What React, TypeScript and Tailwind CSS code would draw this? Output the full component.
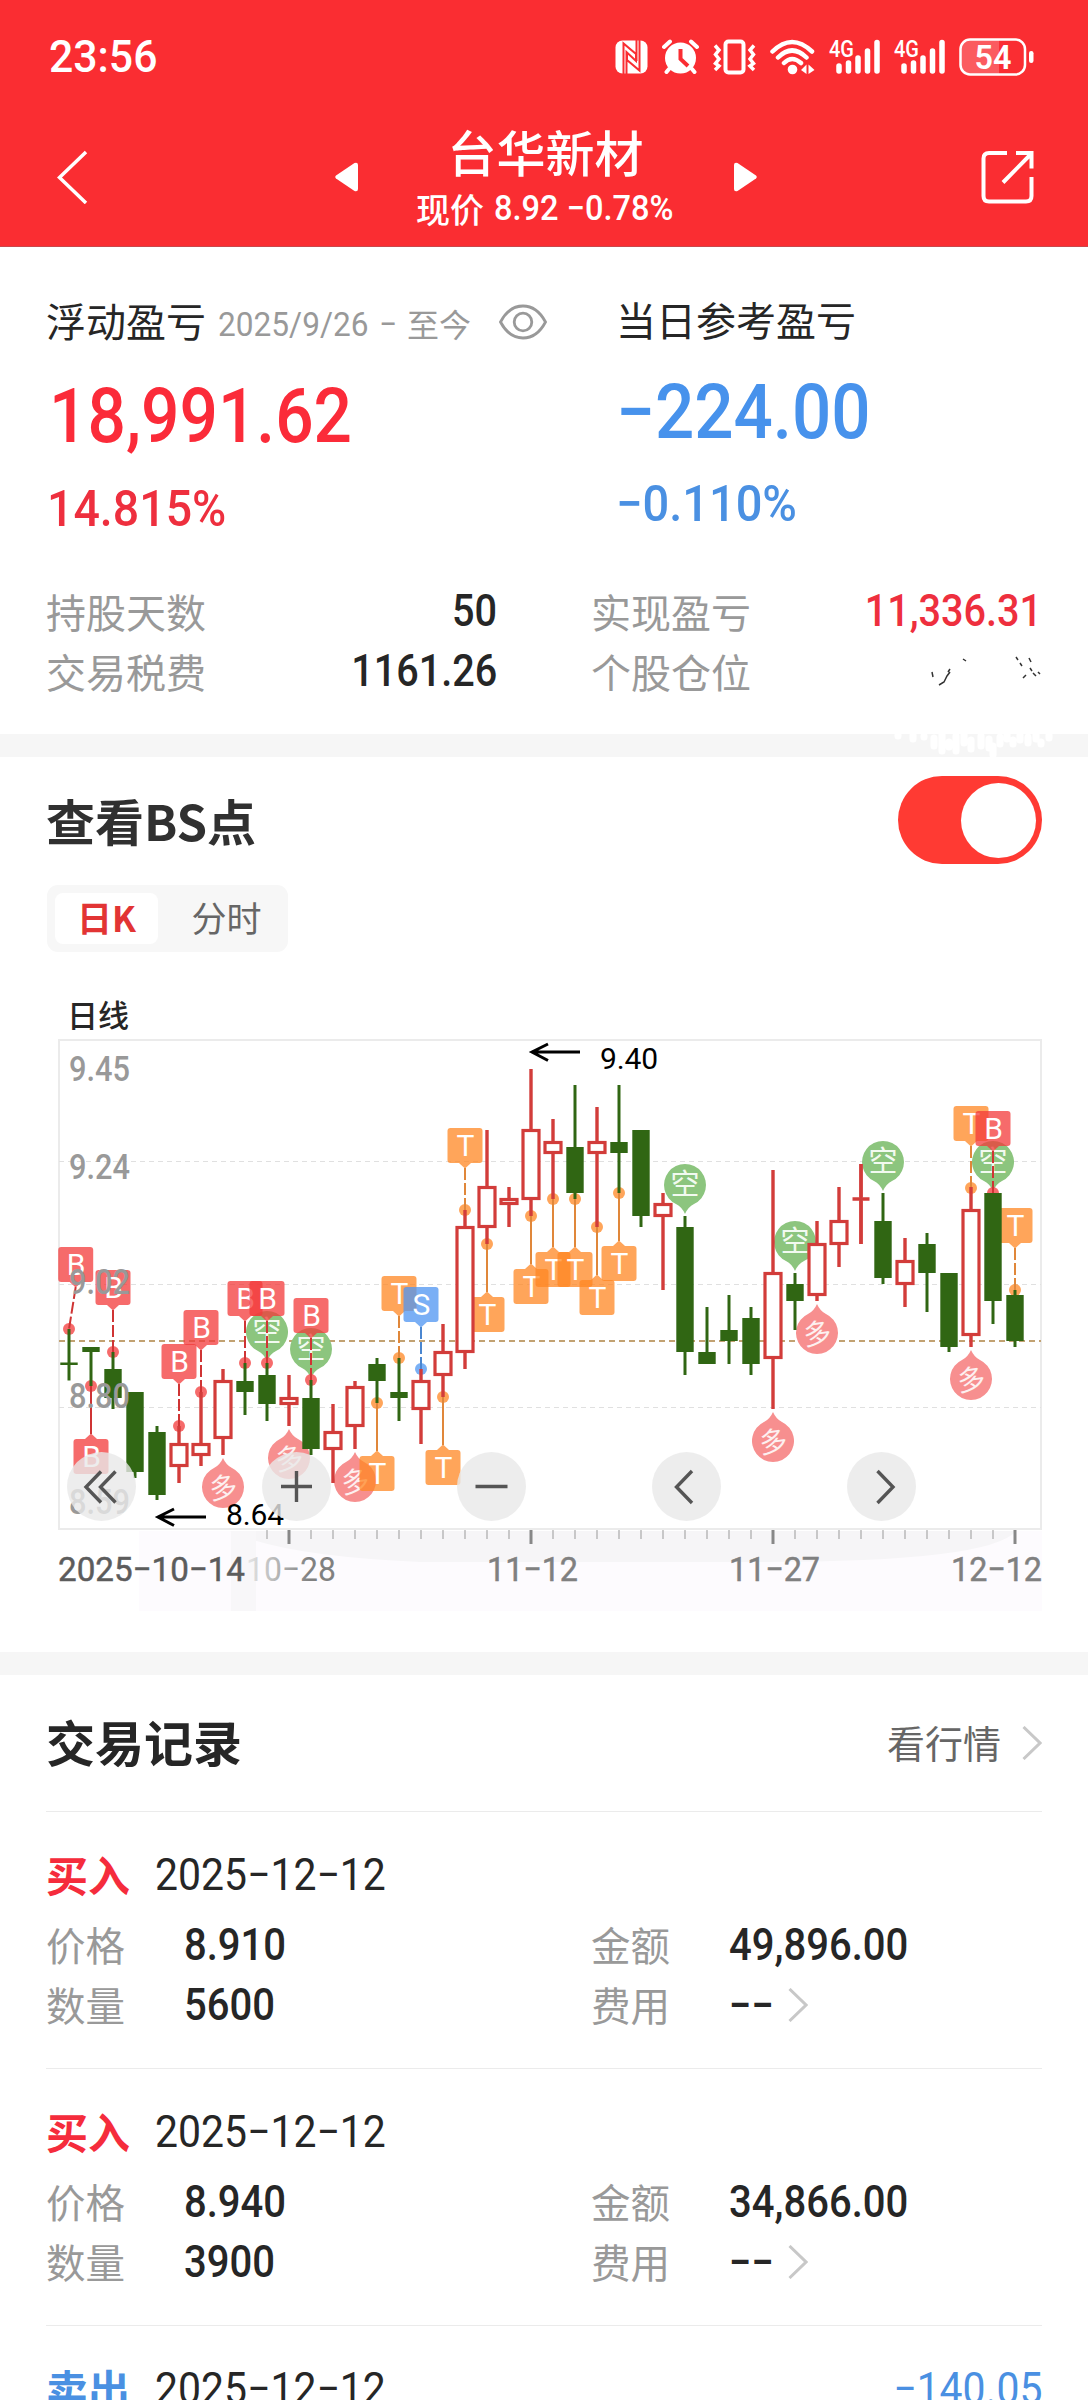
import { Fragment } from "react";

type Candle = {
  // pixel rows: wick top, body top, body bottom, wick bottom
  c: "r" | "g";
  y: [number, number, number, number];
};

const candles: Candle[] = [
  { c: "g", y: [1329, 1362.5, 1365, 1380.5] },
  { c: "g", y: [1347, 1347, 1352, 1386] },
  { c: "g", y: [1352, 1369, 1398, 1409] },
  { c: "g", y: [1392, 1392, 1472, 1478] },
  { c: "g", y: [1426, 1432, 1495, 1500] },
  { c: "r", y: [1426, 1443, 1467, 1483] },
  { c: "r", y: [1392, 1443, 1456, 1466] },
  { c: "r", y: [1369, 1380, 1439, 1455] },
  { c: "g", y: [1363, 1381, 1392, 1415] },
  { c: "g", y: [1363, 1375, 1404, 1421] },
  { c: "r", y: [1375, 1397, 1405, 1426] },
  { c: "g", y: [1380, 1398, 1449, 1455] },
  { c: "r", y: [1404, 1431, 1450, 1483] },
  { c: "r", y: [1381, 1386, 1427, 1449] },
  { c: "g", y: [1358, 1364, 1381, 1403] },
  { c: "g", y: [1358, 1392, 1398, 1421] },
  { c: "r", y: [1369, 1380, 1410, 1444] },
  { c: "r", y: [1324, 1351, 1376, 1397] },
  { c: "r", y: [1210, 1226, 1353, 1369] },
  { c: "r", y: [1130, 1186, 1228, 1244] },
  { c: "r", y: [1187, 1198, 1205, 1227] },
  { c: "r", y: [1069, 1129, 1200, 1216] },
  { c: "r", y: [1119, 1141, 1154, 1199] },
  { c: "g", y: [1085, 1147, 1193, 1199] },
  { c: "r", y: [1107, 1141, 1154, 1227] },
  { c: "g", y: [1085, 1142, 1153, 1193] },
  { c: "g", y: [1130, 1130, 1216, 1227] },
  { c: "r", y: [1193, 1203, 1217, 1290] },
  { c: "g", y: [1216, 1227, 1352, 1375] },
  { c: "g", y: [1307, 1352, 1364, 1364] },
  { c: "g", y: [1295, 1330, 1341, 1364] },
  { c: "g", y: [1307, 1318, 1364, 1375] },
  { c: "r", y: [1170, 1272, 1359, 1409] },
  { c: "g", y: [1273, 1284, 1301, 1330] },
  { c: "r", y: [1221, 1243, 1296, 1301] },
  { c: "r", y: [1187, 1220, 1245, 1267] },
  { c: "r", y: [1164, 1197, 1201, 1244] },
  { c: "g", y: [1193, 1221, 1278, 1284] },
  { c: "r", y: [1238, 1260, 1285, 1307] },
  { c: "g", y: [1233, 1244, 1273, 1312] },
  { c: "g", y: [1273, 1273, 1347, 1352] },
  { c: "r", y: [1187, 1209, 1336, 1347] },
  { c: "g", y: [1193, 1193, 1301, 1324] },
  { c: "g", y: [1290, 1295, 1341, 1347] },
];

const cx = (i: number) => 69 + 22 * i;

// [candle index, letter, dot y, box sits below the dot]
const marks: [number, "B" | "S" | "T", number, boolean][] = [
  [0, "B", 1329, false],
  [1, "B", 1386, true],
  [2, "B", 1352, false],
  [5, "B", 1426, false],
  [6, "B", 1392, false],
  [8, "B", 1363, false],
  [9, "B", 1363, false],
  [11, "B", 1380, false],
  [14, "T", 1403, true],
  [15, "T", 1358, false],
  [16, "S", 1369, false],
  [17, "T", 1397, true],
  [18, "T", 1210, false],
  [19, "T", 1244, true],
  [21, "T", 1216, true],
  [22, "T", 1199, true],
  [23, "T", 1199, true],
  [24, "T", 1227, true],
  [25, "T", 1193, true],
  [41, "T", 1188, false],
  [42, "B", 1193, false],
  [43, "T", 1290, false],
];

const markFill = { B: "#f33a3a", T: "#ff8723", S: "#4e95f2" };
const markLine = { B: "#cf3434", T: "#e0873a", S: "#4a86d0" };

// [candle index, anchor y]
const shorts: [number, number][] = [
  [9, 1363],
  [11, 1380],
  [28, 1216],
  [33, 1273],
  [37, 1193],
  [42, 1193],
];
const longs: [number, number][] = [
  [7, 1455],
  [10, 1426],
  [13, 1449],
  [32, 1409],
  [34, 1301],
  [41, 1347],
];

function Mark({ i, t, y, below }: { i: number; t: "B" | "S" | "T"; y: number; below: boolean }) {
  const x = cx(i);
  const bx = i === 0 ? x + 6.7 : x;
  const top = below ? y + 53 : y - 82;
  const tail = below
    ? `M${bx - 6} ${top} L${bx} ${top - 5.5} L${bx + 6} ${top} Z`
    : `M${bx - 6} ${top + 35} L${bx} ${top + 40.5} L${bx + 6} ${top + 35} Z`;
  return (
    <g>
      <g fill={markFill[t]} opacity="0.75">
        <rect x={bx - 17.5} y={top} width="35" height="35" rx="3" />
        <path d={tail} />
      </g>
      <circle cx={x} cy={y} r="6" fill={markFill[t]} opacity="0.75" />
      {below ? (
        <path d={`M${x} ${y} V${top - 5}`} stroke={markLine[t]} strokeWidth="2" />
      ) : (
        <path d={`M${bx} ${top + 40} L${x} ${y}`} stroke={markLine[t]} strokeWidth="2" strokeDasharray="12 3" />
      )}
      <text x={bx + 0.5} y={top + 28} textAnchor="middle" fontSize="30" fill="#fff" className="font-['Roboto']">
        {t}
      </text>
    </g>
  );
}

function KChart() {
  return (
    <svg viewBox="0 1034 1088 582" className="block w-full h-[582px]" fill="none">
      <path d="M139 1531 H1042 V1611 H139 Z" fill="#fdfbfe" />
      <path d="M230 1531 H1016 Q990 1562 760 1562 H420 Q280 1556 230 1531 Z" fill="#f6f5f7" />
      <path d="M231 1531 H256 V1611 H231 Z" fill="#f8f7f9" />
      <path d="M59 1040 H1041 V1529 H59 Z" stroke="#ebebeb" strokeWidth="2" />
      <path d="M59 1161.5 H1041 M59 1284.5 H1041 M59 1407.5 H1041" stroke="#e0e0e0" strokeDasharray="5 4" />
      <path d="M59 1341 H1041" stroke="#c2a272" strokeWidth="2" strokeDasharray="6 4" />

      {shorts.map(([i, y]) => (
        <g key={`s${i}`}>
          <path
            d={`M${cx(i)} ${y - 2} Q${cx(i) - 3} ${y - 9} ${cx(i) - 9} ${y - 12} A21 21 0 1 1 ${cx(i) + 9} ${y - 12} Q${cx(i) + 3} ${y - 9} ${cx(i)} ${y - 2} Z`}
            fill="#8cc57e"
          />
          <text x={cx(i)} y={y - 21} textAnchor="middle" fontSize="29" fill="#f2faf0" className="font-['Noto_Sans_CJK_SC']">
            空
          </text>
        </g>
      ))}
      {longs.map(([i, y]) => (
        <g key={`l${i}`}>
          <path
            d={`M${cx(i)} ${y + 3} Q${cx(i) + 3} ${y + 10} ${cx(i) + 9} ${y + 13} A21 21 0 1 1 ${cx(i) - 9} ${y + 13} Q${cx(i) - 3} ${y + 10} ${cx(i)} ${y + 3} Z`}
            fill="#f78f8f"
          />
          <text
            x={cx(i)}
            y={y + 43}
            textAnchor="middle"
            fontSize="28"
            fill="#fdf0f0"
            transform={`rotate(-8 ${cx(i)} ${y + 32})`}
            className="font-['Noto_Sans_CJK_SC']"
          >
            多
          </text>
        </g>
      ))}

      {marks.map(([i, t, y, below]) => (
        <Mark key={`${i}${t}`} i={i} t={t} y={y} below={below} />
      ))}

      {candles.map(({ c, y: [hi, top, bot, lo] }, i) => {
        const x = cx(i);
        if (c === "g") {
          return (
            <Fragment key={i}>
              <path d={`M${x} ${hi} V${lo}`} stroke="#306613" strokeWidth="3" />
              <rect x={x - 8.7} y={top} width="17.4" height={bot - top} fill="#306613" />
            </Fragment>
          );
        }
        return (
          <Fragment key={i}>
            <path d={`M${x} ${hi} V${top} M${x} ${bot} V${lo}`} stroke="#d23c3a" strokeWidth="3.4" />
            {bot - top < 5 ? (
              <path d={`M${x - 8.5} ${top + 2} H${x + 8.5} M${x} ${hi} V${lo}`} stroke="#d23c3a" strokeWidth="3.4" />
            ) : (
              <rect
                x={x - 8}
                y={top + 1.5}
                width="16"
                height={bot - top - 3}
                stroke="#d23c3a"
                strokeWidth="3.2"
                fill="#fff"
              />
            )}
          </Fragment>
        );
      })}

      <g fill="#999" fontSize="35" className="font-['Roboto'] font-medium">
        <text x="69" y="1081" textLength="61" lengthAdjust="spacingAndGlyphs">9.45</text>
        <text x="69" y="1179" textLength="61" lengthAdjust="spacingAndGlyphs">9.24</text>
        <text x="69" y="1293.5" textLength="61" lengthAdjust="spacingAndGlyphs">9.02</text>
        <text x="69" y="1408" textLength="61" lengthAdjust="spacingAndGlyphs">8.80</text>
        <text x="69" y="1514" textLength="61" lengthAdjust="spacingAndGlyphs">8.59</text>
      </g>

      <g stroke="#000" strokeWidth="3">
        <path d="M580 1052 H532 M548 1044 L532 1052 L548 1060.5" />
        <path d="M206 1517 H158 M174 1509 L158 1517 L174 1525.5" />
      </g>
      <g fill="#000" fontSize="30" className="font-['Roboto']">
        <text x="600" y="1069" textLength="58" lengthAdjust="spacing">9.40</text>
        <text x="226" y="1525" textLength="58" lengthAdjust="spacing">8.64</text>
      </g>

      {candles.map((_, i) => {
        if (i < 9) return null;
        const big = (i - 10) % 11 === 0;
        return (
          <path
            key={i}
            d={`M${cx(i)} 1530 V${big ? 1544 : 1539}`}
            stroke={big ? "#888" : "#999"}
            strokeWidth={big ? 3 : 1}
          />
        );
      })}

      <g fontSize="34" strokeWidth="0.5" className="font-['Roboto']">
        <text x="58" y="1581" textLength="187" lengthAdjust="spacingAndGlyphs" fill="#5c5c5c" stroke="#5c5c5c">2025−10−14</text>
        <text x="246" y="1581" textLength="90" lengthAdjust="spacingAndGlyphs" fill="url(#fade)">10−28</text>
        <g fill="#808080" stroke="#808080">
          <text x="487" y="1581" textLength="91" lengthAdjust="spacingAndGlyphs">11−12</text>
          <text x="729" y="1581" textLength="91" lengthAdjust="spacingAndGlyphs">11−27</text>
          <text x="951" y="1581" textLength="91" lengthAdjust="spacingAndGlyphs">12−12</text>
        </g>
      </g>
      <defs>
        <linearGradient id="fade" gradientUnits="userSpaceOnUse" x1="246" y1="0" x2="310" y2="0">
          <stop offset="0" stopColor="#e8e8e8" />
          <stop offset="1" stopColor="#808080" />
        </linearGradient>
      </defs>

      <g fill="#e9e9e9" fillOpacity="0.8">
        <circle cx="101.5" cy="1486.5" r="34.5" />
        <circle cx="296.5" cy="1486.5" r="34.5" />
        <circle cx="491.5" cy="1486.5" r="34.5" />
        <circle cx="686.5" cy="1486.5" r="34.5" />
        <circle cx="881.5" cy="1486.5" r="34.5" />
      </g>
      <g stroke="#555" strokeWidth="3.4">
        <path d="M101 1471.5 L86 1487 L101 1502.5 M115.5 1471.5 L100.5 1487 L115.5 1502.5" />
        <path d="M281 1486.5 H312 M296.5 1471 V1502" />
        <path d="M475.5 1486.5 H507.5" />
        <path d="M692 1471 L676.5 1487 L692 1503" />
        <path d="M877.5 1471 L893 1487 L877.5 1503" />
      </g>
    </svg>
  );
}

function Signal() {
  return (
    <svg width="51" height="36" viewBox="0 0 51 36" fill="none" className="overflow-visible">
      <text x="0" y="18" fontSize="23" fill="#fff" textLength="25" lengthAdjust="spacingAndGlyphs" className="font-['Roboto'] font-medium">
        4G
      </text>
      <path d="M10 27 V32 M19.5 24 V32 M29 19 V32 M38.5 12 V32 M48 3.5 V32" stroke="#fff" strokeWidth="5.5" strokeLinecap="round" />
    </svg>
  );
}

function StatusBar() {
  return (
    <div className="flex h-[114px] items-center justify-between pl-[49px] pr-[54px]">
      <span className="inline-block origin-left scale-x-[0.95] text-[45px] font-medium">23:56</span>
      <div className="flex items-center gap-[14px]">
        <svg width="33" height="36" viewBox="0 0 33 36" fill="none">
          <rect x="0.5" y="1.5" width="32" height="33" rx="7" fill="#fff" />
          <path d="M8.5 35 V4.5 L21 15 V22 L11.5 13 V35 M24.5 1 V31.5 L12 21 V14.5 M21.5 22 V1" stroke="#fa2d32" strokeWidth="2" />
        </svg>
        <svg width="37" height="36" viewBox="0 0 37 36" fill="none">
          <circle cx="18.5" cy="19" r="15.5" fill="#fff" />
          <path d="M2 8 L8 2.5 M29 2.5 L35 8 M7 30 L4.5 33 M30 30 L32.5 33" stroke="#fff" strokeWidth="4" strokeLinecap="round" />
          <path d="M18.5 10 V20 L26 27" stroke="#fa2d32" strokeWidth="4" />
        </svg>
        <svg width="43" height="36" viewBox="0 0 43 36" fill="none" stroke="#fff" strokeWidth="4">
          <rect x="12.5" y="2.5" width="18" height="31" rx="3" />
          <path
            d="M2 6.5 L6 11 L2.5 15.5 L6 20 L2.5 24.5 L6 27 L2 31 M41 6.5 L37 11 L40.5 15.5 L37 20 L40.5 24.5 L37 27 L41 31"
            strokeWidth="3.5"
          />
        </svg>
        <svg width="45" height="36" viewBox="0 0 45 36" fill="none">
          <path d="M2.5 12.5 Q22 -6.5 42 12.5 M8 18.5 Q22 4.5 36.5 18.5 M14 24 Q22 16 31 24" stroke="#fff" strokeWidth="4.5" strokeLinecap="round" />
          <circle cx="22.5" cy="30.5" r="4.8" fill="#fff" />
          <path d="M31 31 L36.5 25.5 V35 M38.5 35 V25.5 L44.5 31 Z" fill="#fff" />
        </svg>
        <Signal />
        <Signal />
        <svg width="75" height="38" viewBox="0 0 75 38" fill="none">
          <path d="M11 1.5 H40 V36.5 H11 Q1.5 36.5 1.5 27 V11 Q1.5 1.5 11 1.5 Z" fill="#fff" fillOpacity="0.22" />
          <rect x="1.5" y="1.5" width="64.5" height="35" rx="9.5" stroke="#fff" strokeWidth="2.5" />
          <rect x="70" y="13" width="4.5" height="12" rx="2.2" fill="#fff" />
          <text x="15.5" y="31" fontSize="33" fill="#fff" textLength="37" lengthAdjust="spacingAndGlyphs" className="font-['Roboto'] font-semibold">
            54
          </text>
        </svg>
      </div>
    </div>
  );
}

function Header() {
  return (
    <header className="h-[247px] border-b border-[#c9474b] bg-[#fa2d32] text-white">
      <StatusBar />
      <div className="flex h-[132px] items-center justify-between pb-[6px] pl-[57px] pr-[54px]">
        <svg width="53" height="54" viewBox="0 0 53 54" fill="none">
          <path d="M29 2 L2.5 27.5 L29 53" stroke="#fff" strokeWidth="3.5" />
        </svg>
        <div className="flex items-center">
          <svg width="23" height="30" viewBox="0 0 23 30">
            <path d="M1 13.5 L19.5 1 Q23 0 23 3 V27 Q23 30 19.5 29 L1 16.5 Q-0.5 15 1 13.5 Z" fill="#fff" />
          </svg>
          <div className="flex w-[376px] flex-col items-center gap-2">
            <h1 className="font-['Noto_Sans_CJK_SC'] text-[49px] leading-[56px] font-medium">台华新材</h1>
            <p className="flex h-[44px] items-center font-medium whitespace-nowrap">
              <span className="font-['Noto_Sans_CJK_SC'] text-[34px] leading-[44px]">现价</span>
              <span className="ml-[10px] w-[181px] origin-left scale-x-[0.93] text-[35px] leading-[44px]">8.92 −0.78%</span>
            </p>
          </div>
          <svg width="23" height="30" viewBox="0 0 23 30">
            <path d="M22 13.5 L3.5 1 Q0 0 0 3 V27 Q0 30 3.5 29 L22 16.5 Q23.5 15 22 13.5 Z" fill="#fff" />
          </svg>
        </div>
        <svg width="53" height="54" viewBox="0 0 53 54" fill="none" stroke="#fff" strokeWidth="4">
          <path d="M26 3 H8 Q2.5 3 2.5 8.500 V46 Q2.5 51.5 8 51.5 H45 Q50.5 51.5 50.5 46 V27" />
          <path d="M35 3 H50.5 V18.5 M50 4 L22 32.5" />
        </svg>
      </div>
    </header>
  );
}

function Field({ label, value, red }: { label: string; value?: string; red?: boolean }) {
  return (
    <div className="flex h-[60px] items-center justify-between">
      <span className="font-['Noto_Sans_CJK_SC'] text-[40px] text-[#999]">{label}</span>
      {value ? (
        <span
          className={`origin-right scale-x-[0.9] text-[44px] font-medium ${red ? "text-[#ee2f3e]" : "text-[#262626]"}`}
        >
          {value}
        </span>
      ) : (
        <svg width="112" height="34" viewBox="0 0 112 34" fill="none" stroke="#333" strokeWidth="1.5">
          <path d="M2 18 L3 23 M9 31 L14 28 L17 22 L20 18 M20 15 L18 18 M33 5 L36 7 M86 3 L88 6 M92 12 L90 9 M99 4 L101 8 M103 19 L106 22 M108 18 L110 20 M93 24 L96 21 M100 14 L102 17" />
        </svg>
      )}
    </div>
  );
}

function Summary() {
  return (
    <section className="pb-[33px] text-[#262626]">
      <div className="flex pl-[46px]">
        <div className="w-[570px] pt-[43px]">
          <div className="flex h-[60px] items-center">
            <span className="font-['Noto_Sans_CJK_SC'] text-[40px]">浮动盈亏</span>
            <span className="ml-[12px] mt-[8px] w-[189px] origin-left scale-x-[0.93] text-[34px] [word-spacing:3px] whitespace-nowrap text-[#999]">
              2025/9/26 −
            </span>
            <span className="mt-[5px] font-['Noto_Sans_CJK_SC'] text-[32px] text-[#999]">至今</span>
            <svg width="48" height="36" viewBox="0 0 48 36" fill="none" stroke="#999" strokeWidth="2.8" className="ml-[28px] mt-[3px]">
              <path d="M1.5 18 Q10 2 24 2 Q38 2 46.5 18 Q38 34 24 34 Q10 34 1.5 18 Z" />
              <circle cx="24" cy="18" r="8.8" />
            </svg>
          </div>
          <div className="mt-[21px] ml-[3px] flex h-[90px] origin-left scale-x-[0.89] items-center text-[76px] font-medium text-[#fb2b39]">
            18,991.62
          </div>
          <div className="mt-[18px] ml-px flex h-[60px] origin-left scale-x-[0.93] items-center text-[50px] font-medium text-[#ee2f3e]">
            14.815%
          </div>
        </div>
        <div className="pt-[42px]">
          <div className="flex h-[60px] items-center font-['Noto_Sans_CJK_SC'] text-[40px]">当日参考盈亏</div>
          <div className="mt-[18px] flex h-[90px] origin-left scale-x-[0.91] items-center text-[76px] font-medium text-[#4792ec]">
            −224.00
          </div>
          <div className="mt-[17px] flex h-[60px] origin-left scale-x-[0.94] items-center text-[50px] font-medium text-[#4a90e2]">
            −0.110%
          </div>
        </div>
      </div>
      <div className="mt-[42px] grid grid-cols-2 gap-x-[94px] pr-[46px] pl-[46px]">
        <Field label="持股天数" value="50" />
        <Field label="实现盈亏" value="11,336.31" red />
        <Field label="交易税费" value="1161.26" />
        <Field label="个股仓位" />
      </div>
    </section>
  );
}

function Chevron() {
  return (
    <svg width="20" height="34" viewBox="0 0 20 34" fill="none" stroke="#c8c8c8" strokeWidth="3">
      <path d="M1.5 1 L18 17 L1.5 33" />
    </svg>
  );
}

type Trade = { side: "买入" | "卖出"; profit?: string; price?: string; qty?: string; amount?: string };

const trades: Trade[] = [
  { side: "买入", price: "8.910", qty: "5600", amount: "49,896.00" },
  { side: "买入", price: "8.940", qty: "3900", amount: "34,866.00" },
  { side: "卖出", profit: "−140.05" },
];

function Cell({ label, value, more }: { label: string; value: string; more?: boolean }) {
  return (
    <div className="flex h-[60px] items-center">
      <span className="mb-[3px] w-[138px] font-['Noto_Sans_CJK_SC'] text-[39.5px] text-[#999]">{label}</span>
      <span className="mt-px origin-left scale-x-[0.92] text-[43.5px] font-medium">{value}</span>
      {more && (
        <span className="ml-[10px]">
          <Chevron />
        </span>
      )}
    </div>
  );
}

function TradeItem({ side, profit, price, qty, amount }: Trade) {
  return (
    <li className="mx-[46px] border-b border-[#ebebeb] pt-[33px] pb-[33px]">
      <div className="flex h-[60px] items-center">
        <span
          className={`mb-[3px] font-['Noto_Sans_CJK_SC'] text-[42px] font-bold ${side === "买入" ? "text-[#f52c3c]" : "text-[#4a90e2]"}`}
        >
          {side}
        </span>
        <span className="ml-[25px] origin-left scale-x-[0.93] text-[44px]">2025−12−12</span>
        {profit && <span className="ml-auto origin-right scale-x-[0.93] text-[44px] text-[#4a90e2]">{profit}</span>}
      </div>
      {price && qty && amount && (
        <div className="mt-[10px] grid grid-cols-[545px_1fr]">
          <Cell label="价格" value={price} />
          <Cell label="金额" value={amount} />
          <Cell label="数量" value={qty} />
          <Cell label="费用" value="−−" more />
        </div>
      )}
    </li>
  );
}

export default function App() {
  return (
    <div className="h-[2400px] w-[1088px] overflow-hidden bg-white font-[Roboto,'Noto_Sans_CJK_SC',sans-serif] text-[#262626]">
      <Header />
      <Summary />
      <div className="h-[23px] bg-[#f6f6f6]">
        <svg width="1088" height="23" viewBox="0 0 1088 23" fill="none" stroke="#fff" strokeLinecap="round">
          <path
            d="M898 1 V2 M913 1 V5 M924 2 V3 M934 4 V12 M942 0 V17 M949 8 V13 M956 2 V17 M964 0 V9 M971 6 V15 M981 2 V12 M989 5 V14 M993 12 V21 M1000 3 V10 M1007 0 V5 M1013 6 V10 M1020 1 V6 M1028 3 V9 M1036 0 V5 M1041 8 V10 M1049 1 V4"
            strokeWidth="7"
          />
        </svg>
      </div>

      <section>
        <div className="flex items-center justify-between pt-[19px] pr-[46px] pl-[46px]">
          <h2 className="font-['Noto_Sans_CJK_SC'] text-[49px] leading-[86px] font-bold text-[#303030]">查看BS点</h2>
          <button className="flex h-[88px] w-[144px] items-center justify-end rounded-full bg-[#ff3a33] pr-[6px]">
            <span className="size-[75px] rounded-full bg-white" />
          </button>
        </div>
        <div className="mt-[21px] ml-[47px] flex h-[67px] w-[241px] rounded-[11px] bg-[#f7f7f7] p-[8px] font-['Noto_Sans_CJK_SC'] text-[35px] leading-[48px]">
          <button className="w-[103px] rounded-[8px] bg-white pb-[3px] font-bold text-[#e23434]">日K</button>
          <button className="flex-1 pb-[3px] pl-[15px] text-[#666]">分时</button>
        </div>
        <div className="mt-[42px] h-[40px] pl-[67px] font-['Noto_Sans_CJK_SC'] text-[31px] leading-[39px] font-medium">日线</div>
        <KChart />
      </section>

      <div className="mt-[36px] h-[23px] bg-[#f6f6f6]" />

      <section>
        <div className="mx-[46px] flex h-[137px] items-center justify-between border-b border-[#ebebeb] font-['Noto_Sans_CJK_SC']">
          <h2 className="mb-[4px] text-[49px] leading-[60px] font-bold">交易记录</h2>
          <a className="flex items-center text-[38px] text-[#666]">
            <span className="mb-[4px]">看行情</span>
            <span className="ml-[21px]">
              <Chevron />
            </span>
          </a>
        </div>
        <ul>
          {trades.map((t, i) => (
            <TradeItem key={i} {...t} />
          ))}
        </ul>
      </section>
    </div>
  );
}
